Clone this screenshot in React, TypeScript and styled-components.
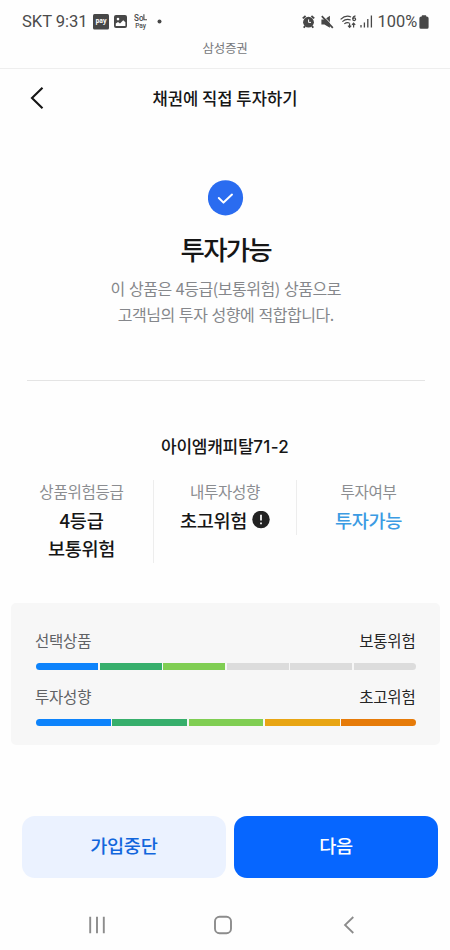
import React from "react";
import styled, { createGlobalStyle } from "styled-components";

const GlobalStyle = createGlobalStyle`
  * { box-sizing: border-box; }
  body { margin: 0; background: #fefefe; font-family: "Noto Sans CJK KR", "Noto Sans", sans-serif; color: #161616; }
  h1, h2, p, dl, dt, dd { margin: 0; font-weight: inherit; }
  button { border: 0; padding: 0; background: none; font: inherit; color: inherit; }
  svg { display: block; flex: none; }
`;

const Screen = styled.div`
  width: 450px;
  height: 950px;
  display: flex;
  flex-direction: column;
  overflow: hidden;
  white-space: nowrap;
`;

const StatusBar = styled.header`
  height: 38px;
  padding: 5px 21.5px 0 22px;
  display: flex;
  align-items: center;
  color: #4b4b4b;
  font: 400 16.6px/22px Roboto, sans-serif;
`;
const Clock = styled.span`
  width: 71px;
  letter-spacing: -0.05px;
`;
const StatusIcons = styled.div<{ $left?: number }>`
  display: flex;
  align-items: center;
  margin-left: ${(p) => p.$left ?? 0}px;
`;
const Battery = styled.span`
  margin-left: 5px;
  width: 41px;
  font-size: 16.4px;
  letter-spacing: 0;
`;
const Spring = styled.div`
  flex: 1;
`;

const Provider = styled.div`
  height: 31px;
  border-bottom: 1px solid #eeeeee;
  text-align: center;
  color: #77797c;
  font-size: 12.5px;
  line-height: 20px;
  letter-spacing: -0.2px;
`;

const TitleBar = styled.div`
  height: 58px;
  display: grid;
  grid-template-columns: 60px 1fr 60px;
  align-items: center;
`;
const BackButton = styled.button`
  padding-left: 29px;
`;
const PageTitle = styled.h1`
  text-align: center;
  font-size: 16.6px;
  font-weight: 500;
  line-height: 24px;
  padding-bottom: 1px;
`;

const Result = styled.section`
  height: 254px;
  margin: 0 25.5px 0 27px;
  padding-top: 53px;
  display: flex;
  flex-direction: column;
  align-items: center;
  border-bottom: 1px solid #e4e4e4;
`;
const ResultTitle = styled.h2`
  margin-top: 13px;
  font-size: 26.5px;
  font-weight: 500;
  line-height: 40px;
  letter-spacing: -1.8px;
`;
const ResultText = styled.p`
  margin-top: 7px;
  text-align: center;
  color: #85878b;
  font-size: 16px;
  line-height: 25.5px;
  letter-spacing: -0.45px;
  word-spacing: 1px;
`;

const ProductName = styled.h2`
  margin-top: 52px;
  height: 26px;
  text-align: center;
  font-size: 17px;
  font-weight: 500;
  line-height: 26px;
  letter-spacing: -0.25px;
`;
const Series = styled.span`
  font-family: Inter, sans-serif;
  font-size: 17px;
  letter-spacing: 0.25px;
`;

const Facts = styled.dl`
  margin: 21px 10px 0;
  display: grid;
  grid-template-columns: 144px 143px 143px;
  align-items: start;
  height: 123px;
`;
const Fact = styled.div<{ $last?: boolean }>`
  text-align: center;
  border-right: ${(p) => (p.$last ? "0" : "1px solid #ededed")};
`;
const FactLabel = styled.dt`
  color: #8b8d91;
  font-size: 15.6px;
  line-height: 22px;
  letter-spacing: -0.3px;
`;
const FactValue = styled.dd<{ $accent?: boolean }>`
  padding: 4px 0 1px;
  display: flex;
  align-items: center;
  justify-content: center;
  gap: 5px;
  color: ${(p) => (p.$accent ? "#3b9be3" : "#161616")};
  font-size: 18.6px;
  font-weight: 500;
  line-height: 28px;
  letter-spacing: -0.3px;
`;

const RiskPanel = styled.section`
  height: 142px;
  margin: 0 10px 0 10.5px;
  padding: 25px 24px 0 25px;
  background: #f7f7f7;
  border-radius: 5px;
`;
const RiskItem = styled.div`
  height: 56px;
`;
const RiskHead = styled.div`
  display: flex;
  justify-content: space-between;
  margin: 0 0.5px 0 -0.5px;
  color: #606265;
  font-size: 15.5px;
  line-height: 24px;
  letter-spacing: -0.2px;
`;
const RiskLevel = styled.span`
  color: #252525;
`;
const Meter = styled.div`
  margin: 11px 0 0 0.5px;
  height: 7px;
  display: flex;
  gap: 1.4px;
  border-radius: 4px;
  overflow: hidden;
`;
const Segment = styled.span<{ $color: string }>`
  flex: 1;
  background: ${(p) => p.$color};
`;

const Actions = styled.footer`
  margin: 71px 12px 0 22px;
  display: grid;
  grid-template-columns: 1fr 1fr;
  gap: 8.5px;
  height: 61.5px;
`;
const ActionButton = styled.button<{ $primary?: boolean }>`
  border-radius: 13px;
  background: ${(p) => (p.$primary ? "#0666ff" : "#ebf2ff")};
  color: ${(p) => (p.$primary ? "#ffffff" : "#1266dc")};
  font-size: 18.6px;
  font-weight: 500;
  line-height: 28px;
  letter-spacing: -0.3px;
  padding-bottom: 3px;
`;

const SystemNav = styled.nav`
  margin-top: 37px;
  padding: 0 91px 0 87px;
  display: flex;
  justify-content: space-between;
  align-items: center;
  height: 20px;
`;

const PayIcon = () => (
  <svg width="16" height="16" viewBox="0 0 16 16">
    <rect width="16" height="15.5" rx="1.5" fill="#474747" />
    <text x="8" y="9.3" textAnchor="middle" fontFamily="Open Sans" fontWeight="700" fontSize="6.2" fill="#fff">pay</text>
  </svg>
);
const GalleryIcon = () => (
  <svg width="13" height="13" viewBox="0 0 13 13">
    <rect width="13" height="13" rx="2" fill="#474747" />
    <circle cx="4" cy="4.1" r="1.3" fill="#fff" />
    <path d="M1.8 11V8.6L4 7l2 1.5L9.2 5.3 11.4 7.2V11z" fill="#fff" />
  </svg>
);
const SolIcon = () => (
  <svg width="14" height="16" viewBox="0 0 14 16" fill="#4b4b4b">
    <text x="0" y="7.3" fontFamily="Roboto" fontSize="8.6" textLength="9.5" lengthAdjust="spacingAndGlyphs" fontWeight="500">So</text>
    <path d="M9.9 .3v5.4h3.1" fill="none" stroke="#4b4b4b" strokeWidth="1.1" />
    <text x="1.2" y="13.7" fontFamily="Roboto" fontSize="6.6" fontWeight="500">Pay</text>
  </svg>
);
const AlarmIcon = () => (
  <svg width="13" height="14" viewBox="0 0 13 14">
    <path d="M.8 3.4 3.6 1M12.2 3.4 9.4 1M3 11l-1.2 1.8M10 11l1.2 1.8" stroke="#474747" strokeWidth="1.9" />
    <circle cx="6.5" cy="7.2" r="5.4" fill="#474747" />
    <path d="M6.6 4.4v3h2.4" fill="none" stroke="#fff" strokeWidth="1" />
  </svg>
);
const MuteIcon = () => (
  <svg width="13" height="14" viewBox="0 0 13 14">
    <path d="M.4 4.6h3L8.9.8v12L3.4 9.6h-3z" fill="#474747" />
    <path d="M2.1.6 13 11.8" stroke="#fefefe" strokeWidth="1" />
    <path d="M.8 1.2 11.8 12.8" stroke="#474747" strokeWidth="1.7" />
  </svg>
);
const WifiIcon = () => (
  <svg width="17" height="14" viewBox="0 0 17 14" fill="none" stroke="#474747" strokeWidth="1.2">
    <path d="M.6 4.4Q6-.7 11 2.1M2.4 6.6Q6.3 3 10.7 5M4.3 8.9Q6.8 6.8 9.4 8" />
    <path d="M15.5.8Q12.8 1.3 12.8 4" />
    <circle cx="14.2" cy="4.2" r="1.4" />
    <path d="M9.6 8.2v4M8 10.6l1.6 1.8 1.6-1.8M13.6 12.4V8.2M12 9.9l1.6-1.8 1.6 1.8" />
  </svg>
);
const SignalIcon = () => (
  <svg width="13" height="13" viewBox="0 0 13 13" stroke="#474747" strokeWidth="1.3">
    <path d="M1 10v2.4M4.4 7.5v4.9M7.8 4v8.4M11.4 .5v11.9" />
  </svg>
);
const BatteryIcon = () => (
  <svg width="10" height="14" viewBox="0 0 10 14" fill="#474747">
    <path d="M2.8 1.5V.8Q2.8.2 3.3.2h3.4q.5 0 .5.6v.7h.5Q9.6 1.5 9.6 3.2v9q0 1.5-1.5 1.5H1.9Q.4 13.7.4 12.2v-9Q.4 1.5 2.3 1.5z" />
  </svg>
);

interface Risk {
  label: string;
  level: string;
  colors: string[];
}
const EMPTY = "#dcdcdc";
const risks: Risk[] = [
  { label: "선택상품", level: "보통위험", colors: ["#0d83fb", "#37af6c", "#80ce53", EMPTY, EMPTY, EMPTY] },
  { label: "투자성향", level: "초고위험", colors: ["#0d83fb", "#37af6c", "#80ce53", "#e8a514", "#e67b09"] },
];

export default function App() {
  return (
    <Screen>
      <GlobalStyle />
      <StatusBar>
        <Clock>SKT 9:31</Clock>
        <PayIcon />
        <StatusIcons $left={5}><GalleryIcon /></StatusIcons>
        <StatusIcons $left={6.5}><SolIcon /></StatusIcons>
        <StatusIcons $left={9}>
          <svg width="5" height="5"><circle cx="2.5" cy="2.5" r="2" fill="#474747" /></svg>
        </StatusIcons>
        <Spring />
        <AlarmIcon />
        <StatusIcons $left={6}><MuteIcon /></StatusIcons>
        <StatusIcons $left={6}><WifiIcon /></StatusIcons>
        <StatusIcons $left={3}><SignalIcon /></StatusIcons>
        <Battery>100%</Battery>
        <BatteryIcon />
      </StatusBar>
      <Provider>삼성증권</Provider>

      <TitleBar>
        <BackButton aria-label="뒤로">
          <svg width="16" height="24" viewBox="0 0 16 24">
            <path d="M13.5 1.8 3 12l10.5 10.2" fill="none" stroke="#151515" strokeWidth="2.1" />
          </svg>
        </BackButton>
        <PageTitle>채권에 직접 투자하기</PageTitle>
      </TitleBar>

      <Result>
        <svg width="36" height="36" viewBox="0 0 36 36">
          <circle cx="17.5" cy="17.8" r="17.6" fill="#2a6cf0" />
          <path d="m10.8 18 4.7 4.6 8.5-8" fill="none" stroke="#fff" strokeWidth="2" strokeLinecap="round" strokeLinejoin="round" />
        </svg>
        <ResultTitle>투자가능</ResultTitle>
        <ResultText>
          이 상품은 4등급(보통위험) 상품으로
          <br />
          고객님의 투자 성향에 적합합니다.
        </ResultText>
      </Result>

      <ProductName>아이엠캐피탈<Series>71-2</Series></ProductName>
      <Facts>
        <Fact>
          <FactLabel>상품위험등급</FactLabel>
          <FactValue>
            <span>4등급<br />보통위험</span>
          </FactValue>
        </Fact>
        <Fact>
          <FactLabel>내투자성향</FactLabel>
          <FactValue>
            초고위험
            <svg width="18" height="18" viewBox="0 0 18 18">
              <circle cx="9" cy="8.5" r="8.7" fill="#222" />
              <path d="M9 3.8v5.8M9 11.5v1.8" stroke="#fff" strokeWidth="1.7" />
            </svg>
          </FactValue>
        </Fact>
        <Fact $last>
          <FactLabel>투자여부</FactLabel>
          <FactValue $accent>투자가능</FactValue>
        </Fact>
      </Facts>

      <RiskPanel>
        {risks.map((risk) => (
          <RiskItem key={risk.label}>
            <RiskHead>
              <span>{risk.label}</span>
              <RiskLevel>{risk.level}</RiskLevel>
            </RiskHead>
            <Meter>
              {risk.colors.map((color, i) => (
                <Segment key={i} $color={color} />
              ))}
            </Meter>
          </RiskItem>
        ))}
      </RiskPanel>

      <Actions>
        <ActionButton>가입중단</ActionButton>
        <ActionButton $primary>다음</ActionButton>
      </Actions>

      <SystemNav>
        <svg width="20" height="20" viewBox="0 0 20 20" stroke="#8c8c8c" strokeWidth="1.9">
          <path d="M3.2 1.8v16.4M10 1.8v16.4M16.8 1.8v16.4" />
        </svg>
        <svg width="20" height="20" viewBox="0 0 20 20">
          <rect x="2" y="1.8" width="16" height="16.4" rx="4.5" fill="none" stroke="#8c8c8c" strokeWidth="1.9" />
        </svg>
        <svg width="20" height="20" viewBox="0 0 20 20">
          <path d="M14.3 2 6 10l8.3 8" fill="none" stroke="#8c8c8c" strokeWidth="1.8" />
        </svg>
      </SystemNav>
    </Screen>
  );
}
